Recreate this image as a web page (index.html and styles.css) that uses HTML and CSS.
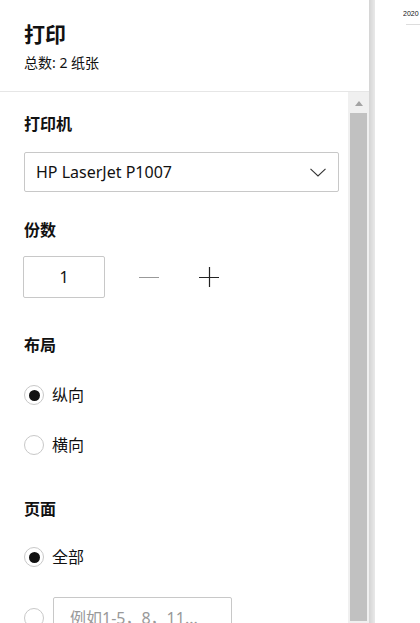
FILE: index.html
```html
<!DOCTYPE html>
<html lang="zh">
<head>
<meta charset="utf-8">
<link rel="stylesheet" href="styles.css">
</head>
<body>
<div class="app">
  <div class="panel">
    <div class="header">
      <div class="title">打印</div>
      <div class="subtitle">总数: 2 纸张</div>
    </div>
    <div class="body">
      <div class="content">
        <div class="label l-printer">打印机</div>
        <div class="select">
          <span>HP LaserJet P1007</span>
          <svg class="chev" width="16" height="9" viewBox="0 0 16 9"><path d="M0.5 0.8 L8 8 L15.5 0.8" fill="none" stroke="#333" stroke-width="1.1"/></svg>
        </div>
        <div class="label l-copies">份数</div>
        <div class="copies">
          <div class="num">1</div>
          <svg class="minus" width="20" height="20" viewBox="0 0 20 20"><path d="M0 10.5 H20" stroke="#999" stroke-width="1"/></svg>
          <svg class="plus" width="20" height="20" viewBox="0 0 20 20"><path d="M0 10.5 H20 M10.5 0 V20" stroke="#222" stroke-width="1.2"/></svg>
        </div>
        <div class="label l-layout">布局</div>
        <div class="radio r1"><span class="dot on"></span><span>纵向</span></div>
        <div class="radio r2"><span class="dot"></span><span>横向</span></div>
        <div class="label l-pages">页面</div>
        <div class="radio r3"><span class="dot on"></span><span>全部</span></div>
        <div class="radio r4"><span class="dot"></span><div class="range">例如1-5，8，11...</div></div>
      </div>
      <div class="scrollbar">
        <div class="arrow"></div>
        <div class="thumb"></div>
      </div>
    </div>
  </div>
  <div class="shadow"></div>
  <div class="preview">
    <div class="date">2020</div>
    <div class="rule"></div>
  </div>
</div>
</body>
</html>
```
FILE: styles.css
```css
html, body {
  margin: 0;
  padding: 0;
  background: #fff;
  overflow: hidden;
}
body {
  font-family: "Noto Sans", "Noto Sans CJK SC", sans-serif;
  color: #111;
}
.app {
  display: flex;
  height: 623px;
  width: 420px;
}
.panel {
  width: 369px;
  flex: none;
  display: flex;
  flex-direction: column;
  background: #fff;
}
.header {
  padding: 20px 24px 0 24px;
  height: 71px;
  border-bottom: 1px solid #e6e6e6;
}
.title {
  font-size: 21px;
  line-height: 28px;
  font-weight: 700;
}
.subtitle {
  font-size: 14px;
  line-height: 20px;
  margin-top: 5px;
}
.body {
  flex: 1;
  display: flex;
  overflow: hidden;
}
.content {
  flex: 1;
  padding: 21px 0 0 24px;
  overflow: hidden;
}
.label {
  font-size: 16px;
  line-height: 22px;
  font-weight: 700;
}
.select {
  margin-top: 17px;
  width: 313px;
  height: 38px;
  border: 1px solid #c8c8c8;
  border-radius: 2px;
  display: flex;
  align-items: center;
  justify-content: space-between;
  padding: 0 12px 0 11px;
  box-sizing: content-box;
  width: 290px;
  font-size: 16px;
}
.chev { margin-top: 1px; }
.l-copies { margin-top: 27px; }
.copies {
  margin-top: 15px;
  display: flex;
  align-items: center;
}
.num {
  width: 80px;
  height: 40px;
  border: 1px solid #c8c8c8;
  border-radius: 2px;
  display: flex;
  align-items: center;
  justify-content: center;
  font-size: 16px;
  margin-left: -1px;
}
.minus { margin-left: 34px; }
.plus { margin-left: 40px; }
.l-layout { margin-top: 36px; }
.radio {
  display: flex;
  align-items: center;
  font-size: 16px;
  line-height: 20px;
  height: 20px;
}
.dot {
  width: 18px;
  height: 18px;
  border: 1px solid #c8c8c8;
  border-radius: 50%;
  margin-right: 8px;
  display: flex;
  align-items: center;
  justify-content: center;
  flex: none;
}
.dot.on::after {
  content: "";
  width: 11px;
  height: 11px;
  border-radius: 50%;
  background: #111;
}
.r1 { margin-top: 29px; }
.r2 { margin-top: 30px; }
.l-pages { margin-top: 43px; }
.r3 { margin-top: 27px; }
.r4 {
  margin-top: 30px;
  height: 42px;
}
.range {
  width: 161px;
  height: 40px;
  border: 1px solid #c8c8c8;
  border-radius: 2px;
  padding-left: 16px;
  display: flex;
  align-items: center;
  color: #999;
  font-size: 16px;
  margin-left: 1px;
}
.scrollbar {
  width: 21px;
  flex: none;
  background: #f0f0f0;
  display: flex;
  flex-direction: column;
  align-items: center;
}
.arrow {
  margin-top: 9px;
  width: 0;
  height: 0;
  border-left: 4.5px solid transparent;
  border-right: 4.5px solid transparent;
  border-bottom: 5px solid #a3a3a3;
}
.thumb {
  margin-top: 7px;
  width: 17px;
  height: 508px;
  background: #c1c1c1;
}
.shadow {
  width: 6px;
  flex: none;
  background: linear-gradient(to right, #d4d4d4, #e9e9e9);
}
.preview {
  flex: 1;
  padding: 9px 0 0 28px;
}
.date {
  font-family: "Liberation Sans", sans-serif;
  font-size: 7px;
  line-height: 10px;
  white-space: nowrap;
  overflow: hidden;
}
.rule {
  margin-top: 5px;
  margin-left: 3px;
  height: 1px;
  background: #ddd;
}
```
